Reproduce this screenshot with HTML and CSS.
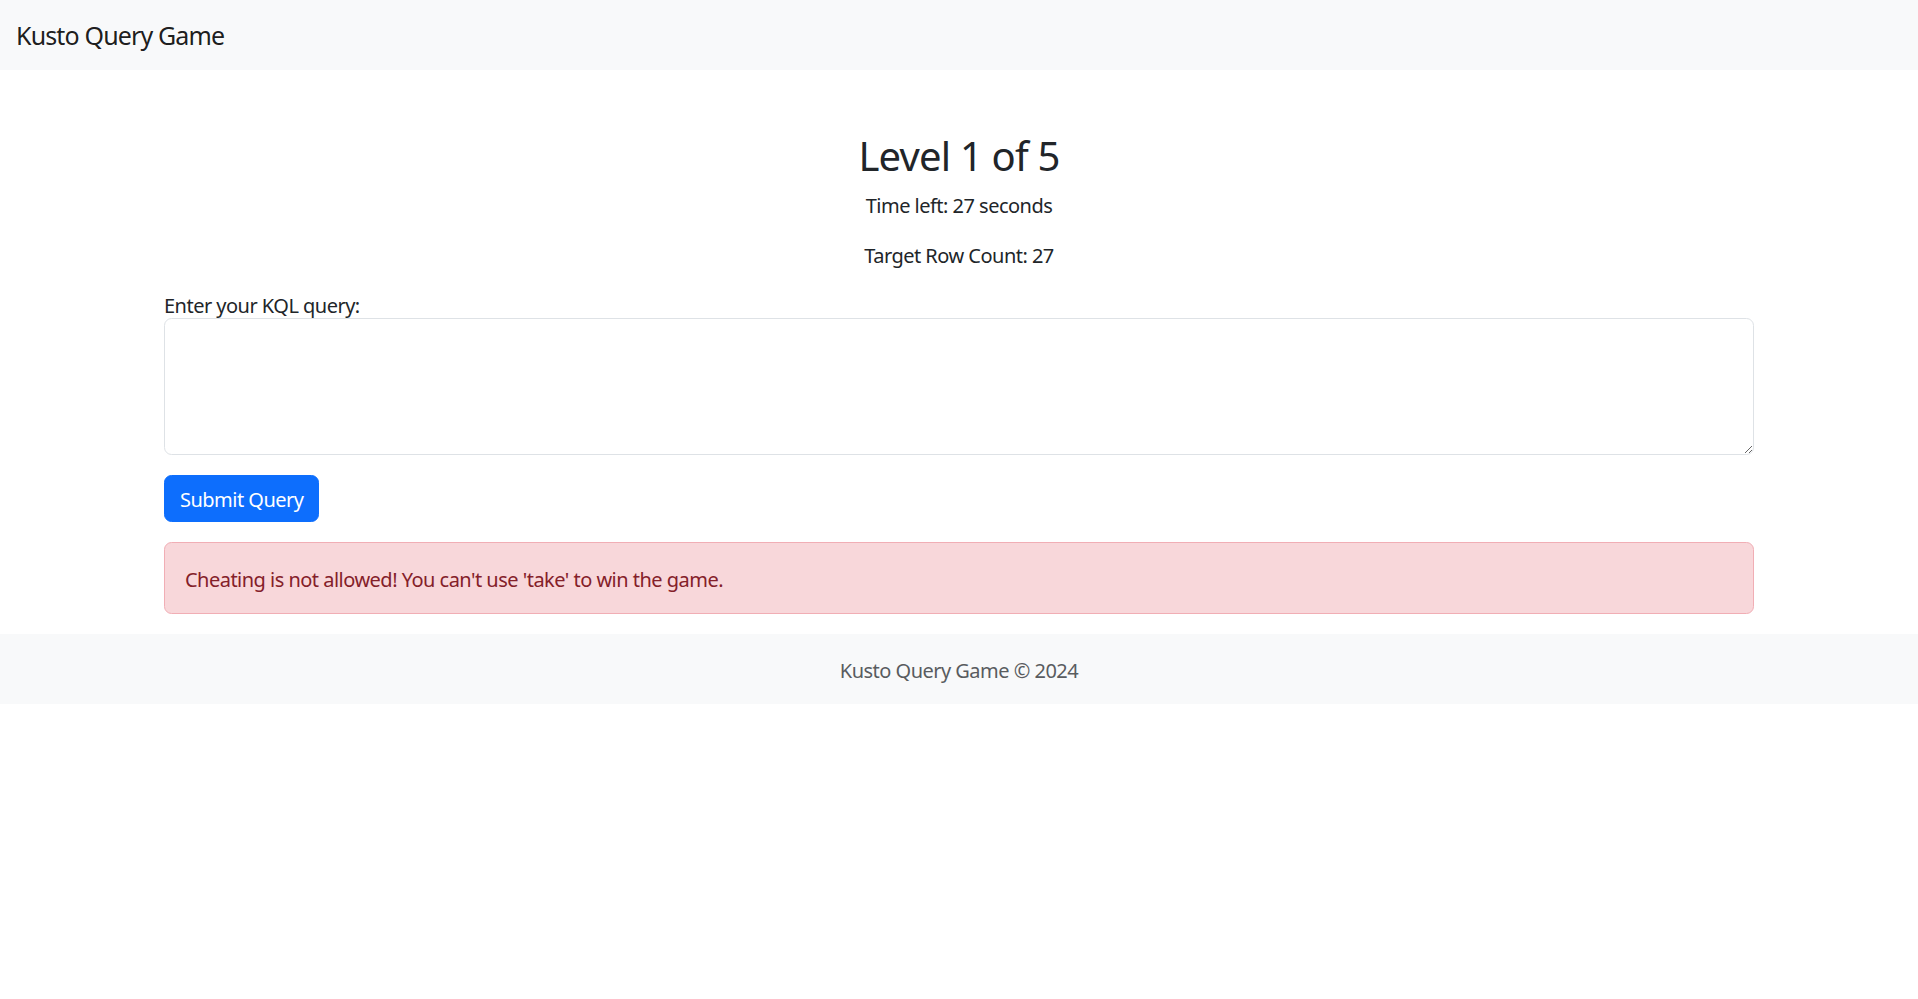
FILE: index.html
```html
<!DOCTYPE html>
<html lang="en">
<head>
<meta charset="utf-8">
<title>Kusto Query Game</title>
<link rel="stylesheet" href="styles.css">
</head>
<body>
<nav class="navbar">
  <a class="brand" href="#">Kusto Query Game</a>
</nav>
<main class="container main">
  <h2 class="title">Level 1 of 5</h2>
  <p class="line">Time left: 27 seconds</p>
  <p class="line">Target Row Count: 27</p>
  <form class="form">
    <div class="group">
      <label class="label" for="q">Enter your KQL query:</label>
      <textarea id="q" class="input" rows="4"></textarea>
    </div>
    <button type="button" class="btn">Submit Query</button>
  </form>
  <div class="alert">Cheating is not allowed! You can't use 'take' to win the game.</div>
</main>
<footer class="footer">Kusto Query Game © 2024</footer>
</body>
</html>
```
FILE: styles.css
```css
* { box-sizing: border-box; }
html, body { margin: 0; padding: 0; }
body {
  font-family: "Noto Sans", "Open Sans", sans-serif;
  font-size: 20px;
  line-height: 1.5;
  letter-spacing: -0.026em;
  color: #212529;
  background: #fff;
}
.navbar {
  background: #f8f9fa;
  height: 70px;
  display: flex;
  align-items: center;
  padding: 2px 16px 0;
}
.brand {
  font-size: 25px;
  letter-spacing: -0.034em;
  color: rgba(0, 0, 0, 0.9);
  text-decoration: none;
  line-height: 1.5;
}
.container {
  width: 1590px;
  margin: 0 auto;
}
.main {
  padding-top: 62px;
}
.title {
  margin: 0 0 8px;
  font-size: 40px;
  font-weight: 400;
  line-height: 1.2;
  letter-spacing: -0.02em;
  text-align: center;
}
.line {
  margin: 0 0 17px;
  padding-top: 3px;
  line-height: 30px;
  text-align: center;
}
.form { margin: 0; }
.group {
  margin-bottom: 20px;
}
.label {
  display: block;
  line-height: 30px;
  padding-top: 2.5px;
  margin-bottom: -2.5px;
}
.input {
  display: block;
  width: 100%;
  height: 137px;
  padding: 7.5px 15px;
  font: inherit;
  color: #212529;
  border: 1px solid #dee2e6;
  border-radius: 7.5px;
  background: #fff;
  resize: vertical;
}
.btn {
  display: inline-block;
  font: inherit;
  letter-spacing: -0.026em;
  color: #fff;
  background: #0d6efd;
  border: 1px solid #0d6efd;
  border-radius: 7.5px;
  padding: 8.5px 15px 6.5px;
  line-height: 1.5;
  margin: 0 0 20px;
  cursor: pointer;
}
.alert {
  margin-bottom: 20px;
  padding: 22px 20px 18px;
  color: #842029;
  background: #f8d7da;
  border: 1px solid #f1aeb5;
  border-radius: 7.5px;
}
.footer {
  background: #f8f9fa;
  padding: 22px 0 18px;
  text-align: center;
  color: #595c5f;
}
```
